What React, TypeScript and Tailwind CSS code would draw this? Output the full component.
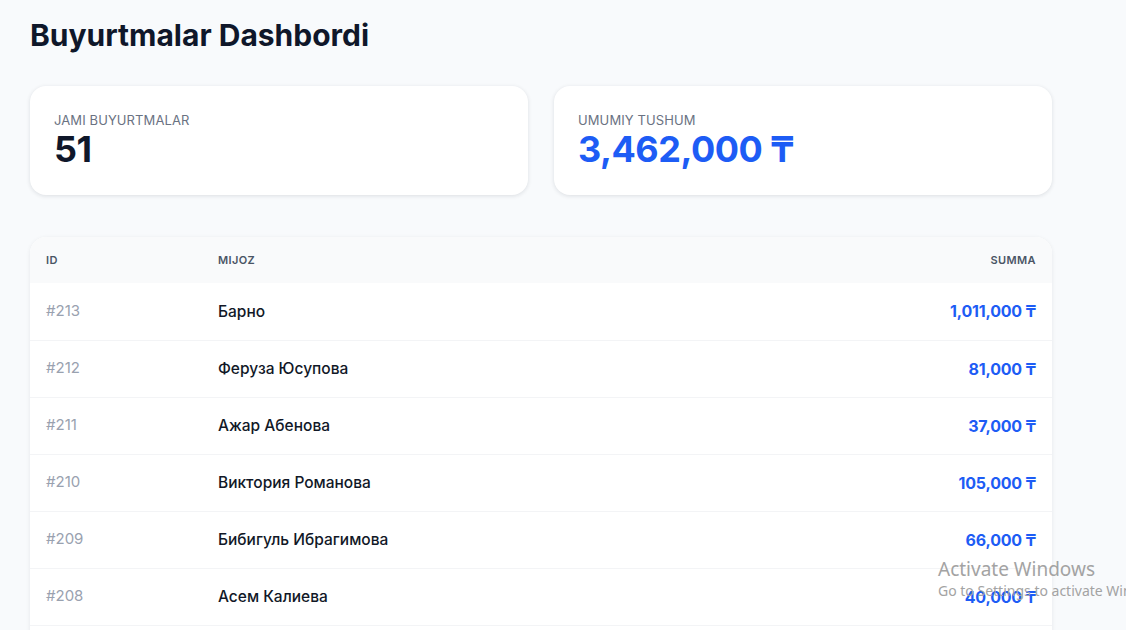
const ORDERS = [
  { id: 213, name: 'Барно', sum: '1,011,000' },
  { id: 212, name: 'Феруза Юсупова', sum: '81,000' },
  { id: 211, name: 'Ажар Абенова', sum: '37,000' },
  { id: 210, name: 'Виктория Романова', sum: '105,000' },
  { id: 209, name: 'Бибигуль Ибрагимова', sum: '66,000' },
  { id: 208, name: 'Асем Калиева', sum: '40,000' },
  { id: 207, name: 'Айгерим Нурланова', sum: '52,000' },
];

function StatCard({ label, value, accent }: { label: string; value: string; accent?: boolean }) {
  return (
    <div className="flex-1 bg-white rounded-2xl shadow-[0_1px_4px_rgba(15,23,42,0.12)] px-6 pt-[25px] pb-[26px]">
      <div className="text-[13px] leading-[18px] text-gray-500 uppercase tracking-[0.1px]">{label}</div>
      <div
        className={`text-[36px] leading-[40px] font-bold tracking-[-0.5px] ${accent ? 'text-[#1d5cf5]' : 'text-[#0f172a]'}`}
      >
        {value}
      </div>
    </div>
  );
}

export default function App() {
  return (
    <div
      className="relative h-[630px] overflow-hidden bg-[#f8fafc] px-[30px] pt-[17px]"
      style={{ fontFamily: 'Inter, "Noto Sans", sans-serif' }}
    >
      <div className="w-[1022px]">
        <h1 className="text-[30px] leading-[36px] font-bold text-[#0f172a]">Buyurtmalar Dashbordi</h1>

        <div className="flex gap-[26px] mt-[33px]">
          <StatCard label="Jami buyurtmalar" value="51" />
          <StatCard label="Umumiy tushum" value="3,462,000 ₸" accent />
        </div>

        <div className="mt-[42px] bg-white rounded-2xl shadow-[0_1px_4px_rgba(15,23,42,0.08)] overflow-hidden">
          <table className="w-full border-collapse">
            <thead>
              <tr className="bg-gray-50 h-[46px]">
                <th className="w-[172px] pl-4 text-left text-[11px] font-semibold text-gray-600 uppercase tracking-[0.4px]">
                  ID
                </th>
                <th className="pl-4 text-left text-[11px] font-semibold text-gray-600 uppercase tracking-[0.4px]">
                  Mijoz
                </th>
                <th className="pr-4 text-right text-[11px] font-semibold text-gray-600 uppercase tracking-[0.4px]">
                  Summa
                </th>
              </tr>
            </thead>
            <tbody>
              {ORDERS.map((o) => (
                <tr key={o.id} className="h-[57px] border-b border-gray-100">
                  <td className="pl-4 text-[15px] text-gray-400">#{o.id}</td>
                  <td className="pl-4 text-[15.5px] font-medium text-[#111827]">{o.name}</td>
                  <td className="pr-4 text-right text-[16px] font-bold text-[#1d5cf5] tracking-[-0.2px]">{o.sum} ₸</td>
                </tr>
              ))}
            </tbody>
          </table>
        </div>
      </div>

      <div
        className="absolute left-[938px] top-[557px] text-[#a3a3a3] pointer-events-none"
        style={{ fontFamily: '"Noto Sans", sans-serif' }}
      >
        <div className="text-[19px] leading-[24px]">Activate Windows</div>
        <div className="text-[14px] leading-[20px] whitespace-nowrap">Go to Settings to activate Windows.</div>
      </div>
    </div>
  );
}
